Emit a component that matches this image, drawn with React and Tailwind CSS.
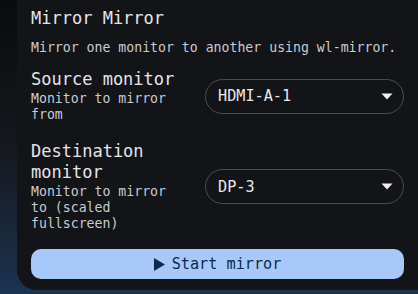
import React from "react";

function Caret() {
  return (
    <svg width="12" height="7" viewBox="0 0 12 7" className="shrink-0">
      <path d="M0.5 0.5 L11.5 0.5 L6 6.5 Z" fill="#f1f1f4" />
    </svg>
  );
}

function Select({ value }) {
  return (
    <div className="flex h-[35px] w-[199px] shrink-0 items-center justify-between rounded-full border border-[#4a4d55] pl-[12px] pr-[10px]">
      <span className="text-[15.2px] leading-[20px] text-[#e8e8ee]">{value}</span>
      <Caret />
    </div>
  );
}

function Row({ title, desc, value, className }) {
  return (
    <div className={"flex items-center justify-between " + className}>
      <div className="w-[150px] shrink-0">
        <div className="text-[17px] leading-[21px] text-[#e4e4ea]">{title}</div>
        <div className="mt-[1px] text-[13.2px] leading-[16px] text-[#c9cbd3]">{desc}</div>
      </div>
      <Select value={value} />
    </div>
  );
}

export default function App() {
  return (
    <div
      className="h-[294px] w-[418px] overflow-hidden bg-gradient-to-b from-[#0a0b0d] via-[#15181d] to-[#1b3352]"
      style={{ fontFamily: '"DejaVu Sans Mono", "Liberation Mono", monospace' }}
    >
      <div className="ml-[17px] flex h-[290px] flex-col rounded-bl-[20px] bg-[#131418] pl-[14px] pr-[14px] pt-[8px]">
        <div className="text-[17px] leading-[20px] text-[#e4e4ea]">Mirror Mirror</div>
        <div className="mt-[12px] text-[13.2px] leading-[16px] text-[#c9cbd3]">
          Mirror one monitor to another using wl-mirror.
        </div>
        <Row
          className="mt-[13px]"
          title="Source monitor"
          desc="Monitor to mirror from"
          value="HDMI-A-1"
        />
        <Row
          className="mt-[18px]"
          title="Destination monitor"
          desc="Monitor to mirror to (scaled fullscreen)"
          value="DP-3"
        />
        <button className="mt-[17px] flex h-[30px] w-full items-center justify-center gap-[7px] rounded-[10px] bg-[#a8c8fa] text-[15.2px] leading-[20px] text-[#0b2a4c]">
          <svg width="11" height="13" viewBox="0 0 11 13">
            <path d="M0 0 L11 6.5 L0 13 Z" fill="#0b2a4c" />
          </svg>
          <span>Start mirror</span>
        </button>
      </div>
    </div>
  );
}
